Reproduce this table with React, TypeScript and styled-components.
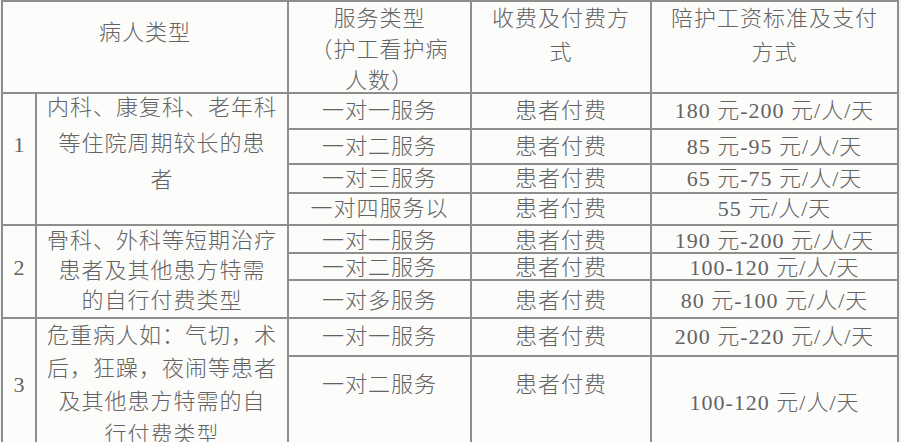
import React from "react"
import styled, { createGlobalStyle } from "styled-components"

const GlobalStyle = createGlobalStyle`
  html, body {
    margin: 0;
    padding: 0;
    overflow: hidden;
    background: #f4f4f3;
  }
`

const Sheet = styled.div`
  width: 901px;
  height: 442px;
  overflow: hidden;
  padding-left: 1px;
  box-sizing: border-box;
  font-family: "Liberation Serif", "Noto Sans CJK SC", serif;
  font-size: 22px;
  font-weight: 300;
  letter-spacing: 1px;
  color: #636363;
`

const Grid = styled.div`
  display: grid;
  width: 898px;
  grid-template-columns: 32px 250px 181px 178px 245px;
  grid-template-rows: 90px 34px 33px 27px 30px 26px 25px 36px 36px 92px;
  gap: 2px;
  padding: 2px;
  box-sizing: border-box;
  background: #8e8e8c;
`

const Cell = styled.div<{ $start?: boolean; $pt?: number; $lh?: number }>`
  background: #fcfcfb;
  overflow: hidden;
  display: flex;
  justify-content: center;
  align-items: ${(p) => (p.$start ? "flex-start" : "center")};
  padding-top: ${(p) => p.$pt ?? 0}px;
  box-sizing: border-box;
  line-height: ${(p) => p.$lh ?? 30}px;
  text-align: center;
  white-space: nowrap;
`

const Num = styled(Cell)`
  letter-spacing: 0;
  font-weight: 400;
`

const Text = styled.div<{ $shift?: number }>`
  margin-top: ${(p) => p.$shift ?? 0}px;
`

type Group = {
  num: string
  numTop: number
  desc: string[]
  descLh: number
  descShift: number
  rowShift: number
  rows: { service: string; wage: string }[]
}

const groups: Group[] = [
  {
    num: "1",
    numTop: 36,
    desc: ["内科、康复科、老年科", "等住院周期较长的患", "者"],
    descLh: 36,
    descShift: -4,
    rowShift: 0,
    rows: [
      { service: "一对一服务", wage: "180 元-200 元/人/天" },
      { service: "一对二服务", wage: "85 元-95 元/人/天" },
      { service: "一对三服务", wage: "65 元-75 元/人/天" },
      { service: "一对四服务以", wage: "55 元/人/天" },
    ],
  },
  {
    num: "2",
    numTop: 27,
    desc: ["骨科、外科等短期治疗", "患者及其他患方特需", "的自行付费类型"],
    descLh: 30,
    descShift: 0,
    rowShift: 3,
    rows: [
      { service: "一对一服务", wage: "190 元-200 元/人/天" },
      { service: "一对二服务", wage: "100-120 元/人/天" },
      { service: "一对多服务", wage: "80 元-100 元/人/天" },
    ],
  },
  {
    num: "3",
    numTop: 51,
    desc: ["危重病人如：气切，术", "后，狂躁，夜闹等患者", "及其他患方特需的自", "行付费类型"],
    descLh: 33,
    descShift: 0,
    rowShift: 0,
    rows: [
      { service: "一对一服务", wage: "200 元-220 元/人/天" },
      { service: "一对二服务", wage: "100-120 元/人/天" },
    ],
  },
]

const lines = (items: string[]) =>
  items.map((t, i) => (
    <React.Fragment key={i}>
      {i > 0 && <br />}
      {t}
    </React.Fragment>
  ))

export default function App() {
  let row = 2
  return (
    <>
      <GlobalStyle />
      <Sheet>
        <Grid>
          <Cell $start $pt={15} $lh={32} style={{ gridColumn: "1 / 3" }}>
            病人类型
          </Cell>
          <Cell $start $lh={31}>
            <Text $shift={1}>{lines(["服务类型", "（护工看护病", "人数）"])}</Text>
          </Cell>
          <Cell $start $lh={34}>
            <Text>{lines(["收费及付费方", "式"])}</Text>
          </Cell>
          <Cell $start $lh={34}>
            <Text>{lines(["陪护工资标准及支付", "方式"])}</Text>
          </Cell>

          {groups.map((g) => {
            const start = row
            row += g.rows.length
            const span = `${start} / ${row}`
            return (
              <React.Fragment key={g.num}>
                <Num $start $pt={g.numTop} style={{ gridRow: span, gridColumn: 1 }}>
                  {g.num}
                </Num>
                <Cell $start $lh={g.descLh} style={{ gridRow: span, gridColumn: 2 }}>
                  <Text $shift={g.descShift}>{lines(g.desc)}</Text>
                </Cell>
                {g.rows.map((r, i) => {
                  const tall = g.num === "3" && i === 1
                  const pt = tall ? 12 : g.rowShift
                  return (
                    <React.Fragment key={i}>
                      <Cell $start={tall} $pt={pt} $lh={32}>
                        {r.service}
                      </Cell>
                      <Cell $start={tall} $pt={pt} $lh={32}>
                        患者付费
                      </Cell>
                      <Cell $pt={g.rowShift} $lh={32}>
                        {r.wage}
                      </Cell>
                    </React.Fragment>
                  )
                })}
              </React.Fragment>
            )
          })}
        </Grid>
      </Sheet>
    </>
  )
}
